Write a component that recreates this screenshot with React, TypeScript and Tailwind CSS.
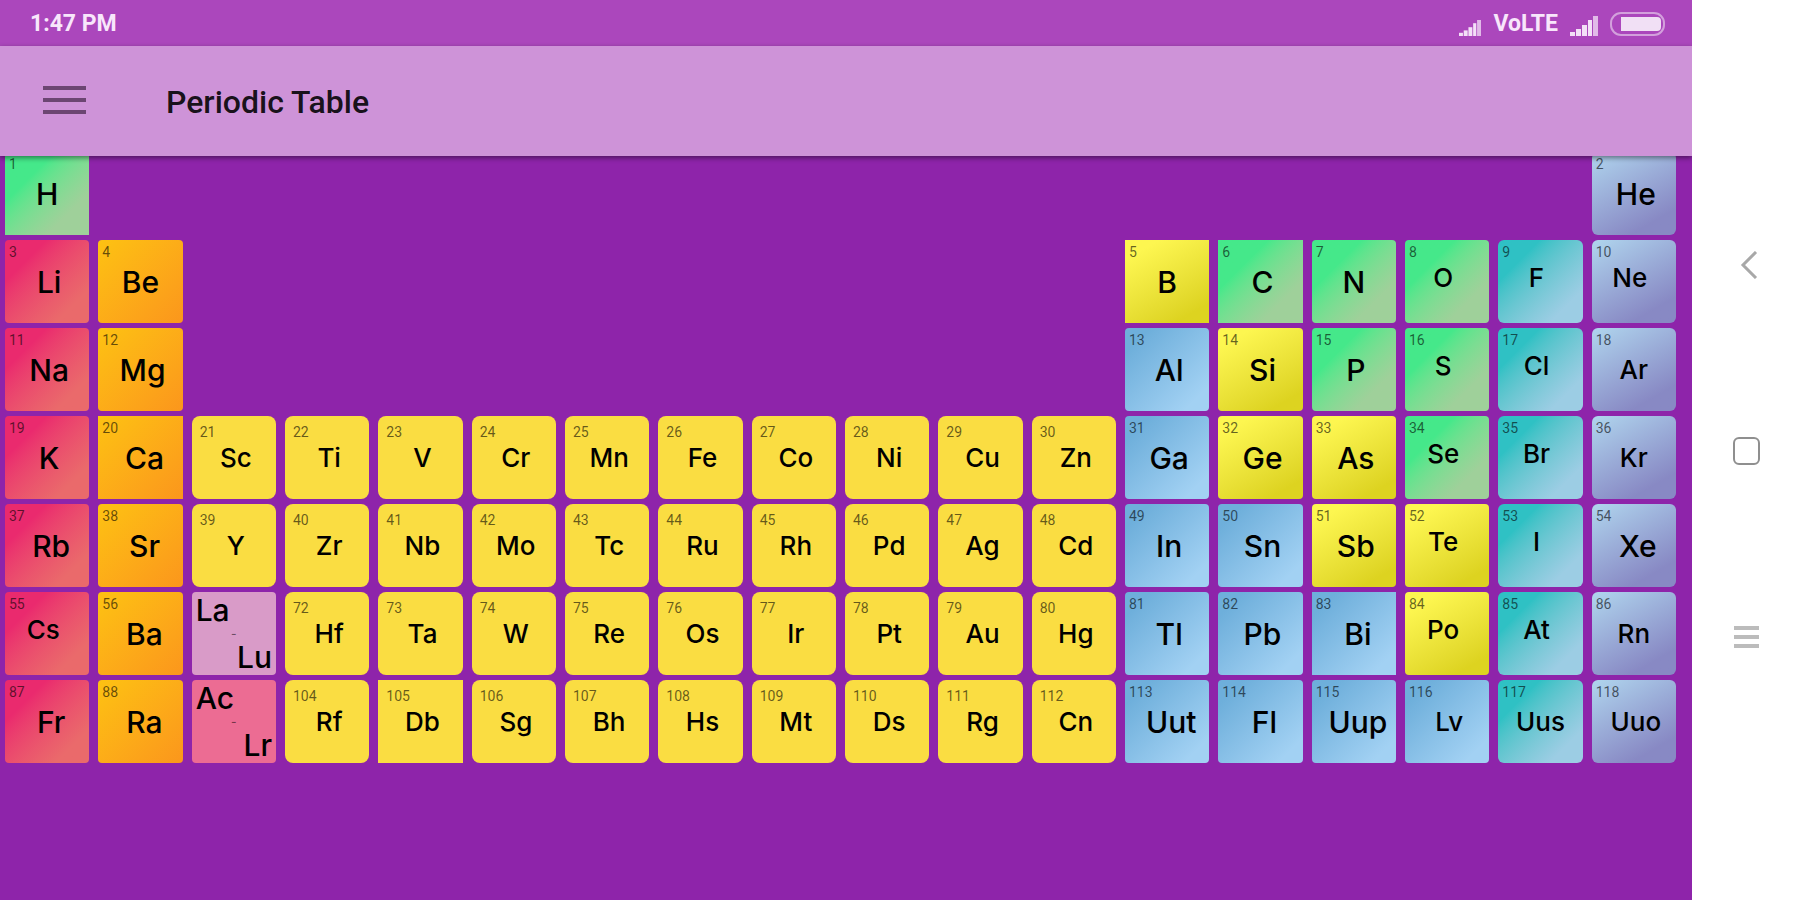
import React from 'react';

type Kind =
  | 'nonmetal'
  | 'alkali'
  | 'alkaline'
  | 'transition'
  | 'metalloid'
  | 'post'
  | 'halogen'
  | 'noble'
  | 'lanthanide'
  | 'actinide';

type Spot = 'large' | 'core' | 'wide' | 'medium' | 'center' | 'raised';

type Element = {
  num: number;
  symbol: string;
  kind: Kind;
  spot: Spot;
  square?: boolean;
};

type Series = { from: string; to: string; kind: Kind };

type Cell = Element | Series | { span: 10 | 16 };

const kindStyles: Record<Kind, string> = {
  nonmetal: 'bg-linear-135 from-[#45e88a] from-30% to-[#9fd09a] to-75% rounded',
  alkali: 'bg-linear-135 from-[#ea2a6e] from-25% to-[#ea6a6b] to-80% rounded',
  alkaline: 'bg-linear-135 from-[#fdc212] to-[#fb961c] rounded',
  transition: 'bg-[#fadd42] rounded-lg',
  metalloid: 'bg-linear-150 from-[#fdf650] from-15% to-[#ddd320] to-85% rounded',
  post: 'bg-linear-135 from-[#6eafdb] from-15% to-[#a2d1f3] to-85% rounded',
  halogen: 'bg-linear-135 from-[#2fc1c4] from-25% to-[#9ccde4] to-80% rounded-md',
  noble: 'bg-linear-150 from-[#b0d6ee] to-[#8889c4] to-80% rounded-md',
  lanthanide: 'bg-[#d99bc8] rounded',
  actinide: 'bg-[#ec6c93] rounded',
};

const spotStyles: Record<Spot, string> = {
  large: 'text-[30px] pl-1',
  core: 'text-[30px]',
  wide: 'text-[30px] pl-2',
  medium: 'text-[26px] pl-1',
  center: 'text-[26px]',
  raised: 'text-[26px] pr-2 pb-2',
};

const el = (num: number, symbol: string, kind: Kind, spot: Spot = 'large', square = false): Element => ({
  num,
  symbol,
  kind,
  spot,
  square,
});

// 遷移金属は番号が連続しているのでまとめて作る
const transition = (start: number, symbols: string[]) =>
  symbols.map((s, i) => el(start + i, s, 'transition', 'medium', s === 'Db'));

const rows: Cell[][] = [
  [el(1, 'H', 'nonmetal', 'core', true), { span: 16 }, el(2, 'He', 'noble')],
  [
    el(3, 'Li', 'alkali'),
    el(4, 'Be', 'alkaline', 'core'),
    { span: 10 },
    el(5, 'B', 'metalloid', 'core', true),
    el(6, 'C', 'nonmetal', 'large', true),
    el(7, 'N', 'nonmetal', 'core'),
    el(8, 'O', 'nonmetal', 'raised'),
    el(9, 'F', 'halogen', 'raised'),
    el(10, 'Ne', 'noble', 'raised'),
  ],
  [
    el(11, 'Na', 'alkali'),
    el(12, 'Mg', 'alkaline'),
    { span: 10 },
    el(13, 'Al', 'post'),
    el(14, 'Si', 'metalloid'),
    el(15, 'P', 'nonmetal'),
    el(16, 'S', 'nonmetal', 'raised'),
    el(17, 'Cl', 'halogen', 'raised'),
    el(18, 'Ar', 'noble', 'center'),
  ],
  [
    el(19, 'K', 'alkali'),
    el(20, 'Ca', 'alkaline', 'wide', true),
    ...transition(21, ['Sc', 'Ti', 'V', 'Cr', 'Mn', 'Fe', 'Co', 'Ni', 'Cu', 'Zn']),
    el(31, 'Ga', 'post'),
    el(32, 'Ge', 'metalloid'),
    el(33, 'As', 'metalloid'),
    el(34, 'Se', 'nonmetal', 'raised'),
    el(35, 'Br', 'halogen', 'raised'),
    el(36, 'Kr', 'noble', 'center'),
  ],
  [
    el(37, 'Rb', 'alkali', 'wide'),
    el(38, 'Sr', 'alkaline', 'wide'),
    ...transition(39, ['Y', 'Zr', 'Nb', 'Mo', 'Tc', 'Ru', 'Rh', 'Pd', 'Ag', 'Cd']),
    el(49, 'In', 'post'),
    el(50, 'Sn', 'post'),
    el(51, 'Sb', 'metalloid'),
    el(52, 'Te', 'metalloid', 'raised'),
    el(53, 'I', 'halogen', 'raised'),
    el(54, 'Xe', 'noble', 'wide'),
  ],
  [
    el(55, 'Cs', 'alkali', 'raised'),
    el(56, 'Ba', 'alkaline', 'wide'),
    { from: 'La', to: 'Lu', kind: 'lanthanide' },
    ...transition(72, ['Hf', 'Ta', 'W', 'Re', 'Os', 'Ir', 'Pt', 'Au', 'Hg']),
    el(81, 'Tl', 'post'),
    el(82, 'Pb', 'post'),
    el(83, 'Bi', 'post', 'wide', true),
    el(84, 'Po', 'metalloid', 'raised'),
    el(85, 'At', 'halogen', 'raised'),
    el(86, 'Rn', 'noble', 'center'),
  ],
  [
    el(87, 'Fr', 'alkali', 'wide'),
    el(88, 'Ra', 'alkaline', 'wide'),
    { from: 'Ac', to: 'Lr', kind: 'actinide' },
    ...transition(104, ['Rf', 'Db', 'Sg', 'Bh', 'Hs', 'Mt', 'Ds', 'Rg', 'Cn']),
    el(113, 'Uut', 'post', 'wide'),
    el(114, 'Fl', 'post', 'wide'),
    el(115, 'Uup', 'post', 'wide'),
    el(116, 'Lv', 'post', 'medium'),
    el(117, 'Uus', 'halogen', 'center'),
    el(118, 'Uuo', 'noble', 'medium'),
  ],
];

function Tile({ cell }: { cell: Cell }) {
  if ('span' in cell) {
    return <div className={cell.span === 16 ? 'col-span-16' : 'col-span-10'} />;
  }

  if ('from' in cell) {
    return (
      <button
        className={`flex flex-col justify-between px-1 py-1 font-['Inter','Liberation_Sans',sans-serif] text-[30px] leading-7 font-medium text-black ${kindStyles[cell.kind]}`}
      >
        <span className="self-start">{cell.from}</span>
        <span className="self-center text-xs leading-3 text-black/50">-</span>
        <span className="self-end">{cell.to}</span>
      </button>
    );
  }

  return (
    <button className={`grid ${kindStyles[cell.kind]} ${cell.square ? 'rounded-none!' : ''}`}>
      <span
        className={`col-start-1 row-start-1 self-start justify-self-start text-sm leading-4 text-black/60 ${
          cell.kind === 'transition' ? 'pl-2 pt-2' : 'pl-1 pt-1'
        }`}
      >
        {cell.num}
      </span>
      <span
        className={`col-start-1 row-start-1 place-self-center font-['Inter','Liberation_Sans',sans-serif] leading-8 font-medium text-black ${spotStyles[cell.spot]}`}
      >
        {cell.symbol}
      </span>
    </button>
  );
}

function Signal({ className }: { className: string }) {
  return (
    <svg className={className} viewBox="0 0 28 20" preserveAspectRatio="none" fill="#f3e0f7" aria-hidden="true">
      <rect x="0" y="16" width="5" height="4" />
      <rect x="6" y="13" width="5" height="7" />
      <rect x="12" y="9" width="5" height="11" />
      <rect x="18" y="4" width="4" height="16" />
      <rect x="23" y="0" width="5" height="20" opacity=".75" />
    </svg>
  );
}

function Battery() {
  return (
    <svg className="h-6 w-14" viewBox="0 0 56 24" fill="none" aria-hidden="true">
      <rect x="1" y="1" width="53" height="22" rx="10" stroke="#d3a0dc" strokeWidth="2" />
      <path d="M11 5h36a4 4 0 0 1 4 4v6a4 4 0 0 1-4 4H11z" fill="#f1e0f5" />
    </svg>
  );
}

export default function App() {
  return (
    <div className="flex min-h-screen bg-white font-['Roboto','Liberation_Sans',sans-serif]">
      <div className="flex min-w-0 flex-1 flex-col bg-[#8e24aa]">
        {/* ステータスバー */}
        <div className="flex h-[46px] items-center justify-between bg-[#ab47bc] pr-[26px] pl-[30px] pt-[2px] text-[23px] font-bold text-[#f8e6fb]">
          <span>1:47 PM</span>
          <div className="flex items-center gap-3">
            <Signal className="mt-2 h-4 w-[22px]" />
            <span>VoLTE</span>
            <Signal className="mt-1 h-5 w-7" />
            <Battery />
          </div>
        </div>

        <header className="z-10 flex h-[110px] items-center bg-[#ce93d8] pl-[43px] shadow-[0_2px_5px_rgba(0,0,0,0.45)]">
          <button aria-label="Menu" className="mr-[80px]">
            <svg className="h-8 w-[43px]" viewBox="0 0 43 32" stroke="#6c4672" strokeWidth="4" aria-hidden="true">
              <path d="M0 3h43M0 15h43M0 27h43" />
            </svg>
          </button>
          <h1 className="pt-[2px] text-[32px] font-medium text-black/90">Periodic Table</h1>
        </header>

        {/* 周期表: 1行目はヘッダーの下に少し隠れる */}
        <main className="-mt-1 grid auto-rows-[83px] grid-cols-18 gap-x-[9px] gap-y-[5px] pr-4 pl-[5px]">
          {rows.flatMap((row, r) => row.map((cell, c) => <Tile key={`${r}-${c}`} cell={cell} />))}
        </main>
      </div>

      {/* 端末のナビゲーション */}
      <nav className="z-20 flex w-[108px] flex-col items-center justify-center gap-[158px] bg-white pt-[2px]">
        <button aria-label="Back">
          <svg className="h-7 w-7" viewBox="0 0 28 28" fill="none" stroke="#a8a8a8" strokeWidth="3" aria-hidden="true">
            <path d="M24 1L11 14l13 13" />
          </svg>
        </button>
        <button aria-label="Home">
          <svg className="h-7 w-7" viewBox="0 0 28 28" fill="none" stroke="#8f8f8f" strokeWidth="2" aria-hidden="true">
            <rect x="2" y="1" width="25" height="26" rx="5" />
          </svg>
        </button>
        <button aria-label="Recent apps">
          <svg className="h-7 w-7" viewBox="0 0 28 28" stroke="#bcbcbc" strokeWidth="4" aria-hidden="true">
            <path d="M2 5h25M2 14h25M2 23h25" />
          </svg>
        </button>
      </nav>
    </div>
  );
}
